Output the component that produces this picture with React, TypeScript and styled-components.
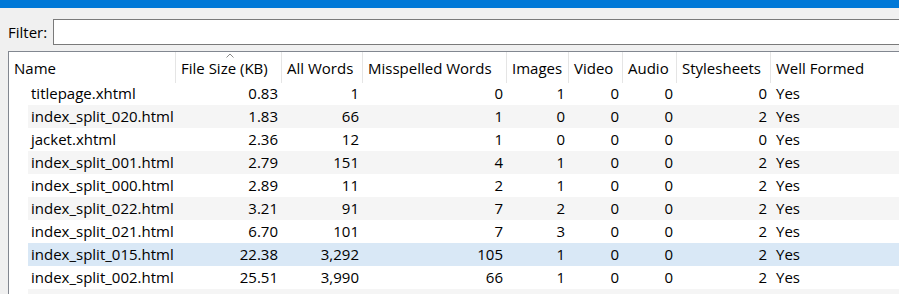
import React from 'react';
import styled, { createGlobalStyle } from 'styled-components';

const GlobalStyle = createGlobalStyle`
  html, body {
    margin: 0;
    padding: 0;
    background: #f0f0f0;
    overflow: hidden;
  }
  body {
    font-family: "Open Sans", "Noto Sans", "Liberation Sans", sans-serif;
    font-size: 15px;
    color: #000;
  }
`;

const HEADER_COLS = '167px 106px 81px 144px 62px 54px 54px 94px 1fr';
const ROW_COLS = '148px 106px 81px 144px 62px 54px 54px 94px 1fr';

const Window = styled.div`
  width: 899px;
  height: 294px;
  display: flex;
  flex-direction: column;
  overflow: hidden;
`;

const TitleStrip = styled.div`
  height: 8px;
  background: #0078d7;
  flex-shrink: 0;
`;

const FilterBar = styled.div`
  display: flex;
  align-items: center;
  gap: 6px;
  padding: 11px 0 0 8px;
  height: 26px;
  flex-shrink: 0;
`;

const FilterLabel = styled.label`
  line-height: 26px;
`;

const FilterInput = styled.input`
  flex: 1;
  height: 26px;
  box-sizing: border-box;
  margin: 0 -20px 0 0;
  border: 1px solid #7a7a7a;
  background: #fff;
  font: inherit;
`;

const TableBox = styled.div`
  margin: 6px -20px 0 8px;
  flex: 1;
  background: #fff;
  border: 1px solid #828790;
  border-right: none;
  border-bottom: none;
`;

const HeaderRow = styled.div`
  display: grid;
  grid-template-columns: ${HEADER_COLS};
  height: 30px;
`;

const HeaderCell = styled.div`
  position: relative;
  padding: 0 0 0 5px;
  line-height: 30px;
  padding-top: 1px;
  box-sizing: border-box;
  border-right: 1px solid #e5e5e5;
  white-space: nowrap;
`;

const SortCaret = styled.svg`
  position: absolute;
  top: 1px;
  left: 50px;
`;

const Row = styled.div<{ $stripe?: boolean; $selected?: boolean }>`
  display: grid;
  grid-template-columns: ${ROW_COLS};
  height: 23px;
  margin-left: 19px;
  background: ${(p) => (p.$selected ? '#d9e8f6' : p.$stripe ? '#f5f5f5' : '#fff')};
`;

const Cell = styled.div<{ $align?: 'left' | 'right' }>`
  line-height: 22px;
  box-sizing: border-box;
  white-space: nowrap;
  text-align: ${(p) => p.$align || 'right'};
  padding-left: ${(p) => (p.$align === 'left' ? '3px' : '0')};
  padding-right: ${(p) => (p.$align === 'left' ? '0' : '4px')};
`;

const WellCell = styled(Cell)`
  padding-left: 5px;
`;

const headers = [
  'Name',
  'File Size (KB)',
  'All Words',
  'Misspelled Words',
  'Images',
  'Video',
  'Audio',
  'Stylesheets',
  'Well Formed',
];

const rows: [string, string, string, string, string, string, string, string, string][] = [
  ['titlepage.xhtml', '0.83', '1', '0', '1', '0', '0', '0', 'Yes'],
  ['index_split_020.html', '1.83', '66', '1', '0', '0', '0', '2', 'Yes'],
  ['jacket.xhtml', '2.36', '12', '1', '0', '0', '0', '0', 'Yes'],
  ['index_split_001.html', '2.79', '151', '4', '1', '0', '0', '2', 'Yes'],
  ['index_split_000.html', '2.89', '11', '2', '1', '0', '0', '2', 'Yes'],
  ['index_split_022.html', '3.21', '91', '7', '2', '0', '0', '2', 'Yes'],
  ['index_split_021.html', '6.70', '101', '7', '3', '0', '0', '2', 'Yes'],
  ['index_split_015.html', '22.38', '3,292', '105', '1', '0', '0', '2', 'Yes'],
  ['index_split_002.html', '25.51', '3,990', '66', '1', '0', '0', '2', 'Yes'],
];

export default function App() {
  return (
    <Window>
      <GlobalStyle />
      <TitleStrip />
      <FilterBar>
        <FilterLabel htmlFor="filter">Filter:</FilterLabel>
        <FilterInput id="filter" />
      </FilterBar>
      <TableBox>
        <HeaderRow>
          {headers.map((h) => (
            <HeaderCell key={h}>
              {h}
              {h === 'File Size (KB)' && (
                <SortCaret width="8" height="5" viewBox="0 0 8 5">
                  <path d="M0.5 4.5 L4 1 L7.5 4.5" fill="none" stroke="#8a8a8a" strokeWidth="1" />
                </SortCaret>
              )}
            </HeaderCell>
          ))}
        </HeaderRow>
        {rows.map((r, i) => (
          <Row key={r[0]} $stripe={i % 2 === 1} $selected={r[0] === 'index_split_015.html'}>
            <Cell $align="left">{r[0]}</Cell>
            {r.slice(1, 8).map((v, j) => (
              <Cell key={j}>{v}</Cell>
            ))}
            <WellCell $align="left">{r[8]}</WellCell>
          </Row>
        ))}
        <Row $stripe />
      </TableBox>
    </Window>
  );
}
